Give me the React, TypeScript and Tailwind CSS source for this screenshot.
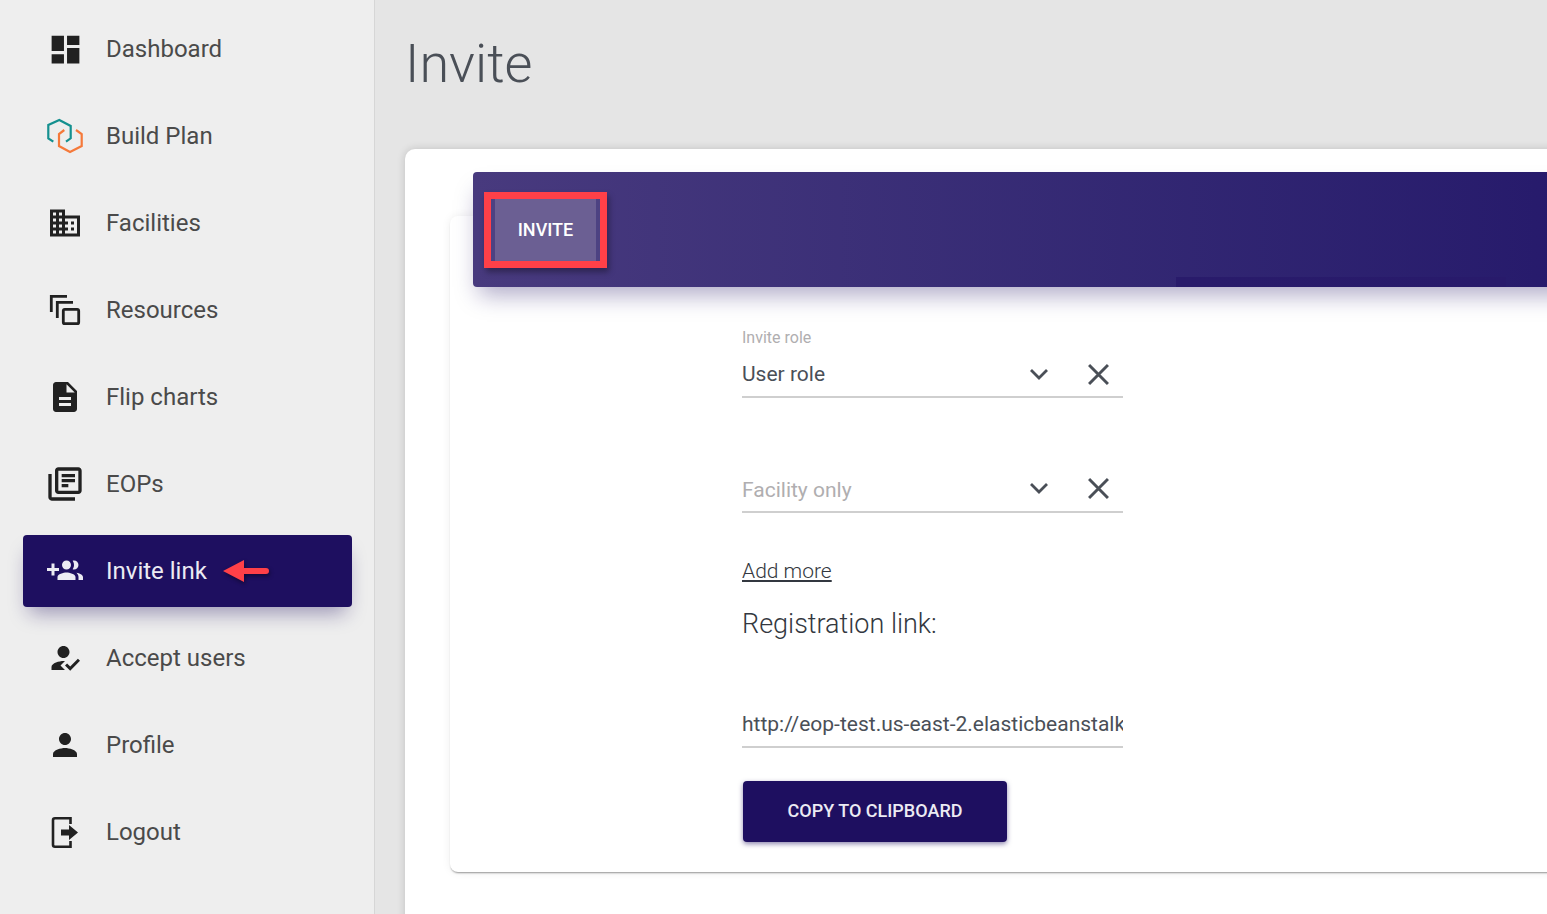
import React from 'react';

function DashboardIcon() {
  return (
    <svg viewBox="0 0 24 24" className="size-[37px] shrink-0 -mx-[0.5px] fill-[#212121]">
      <path d="M3 13h8V3H3v10zm0 8h8v-6H3v6zm10 0h8V11h-8v10zm0-18v6h8V3h-8z" />
    </svg>
  );
}

function BuildPlanIcon() {
  return (
    <svg viewBox="0 0 36 36" className="size-9 shrink-0 fill-none" strokeWidth="2.2">
      <path d="M6.3 23.7 1.3 20.3V7L12.3 2l11.4 6v12.3L19 23.7" stroke="#14908f" />
      <path d="M17.3 12 12 16v12l11 6 11.7-6V16L29 12" stroke="#f5793a" />
    </svg>
  );
}

function FacilitiesIcon() {
  return (
    <svg viewBox="0 0 24 24" className="size-9 shrink-0 fill-[#212121]">
      <path d="M12 7V3H2v18h20V7H12zM6 19H4v-2h2v2zm0-4H4v-2h2v2zm0-4H4V9h2v2zm0-4H4V5h2v2zm4 12H8v-2h2v2zm0-4H8v-2h2v2zm0-4H8V9h2v2zm0-4H8V5h2v2zm10 12h-8v-2h2v-2h-2v-2h2v-2h-2V9h8v10zm-2-8h-2v2h2v-2zm0 4h-2v2h2v-2z" />
    </svg>
  );
}

function ResourcesIcon() {
  return (
    <svg viewBox="0 0 36 36" className="size-9 shrink-0 fill-none stroke-[#212121]" strokeWidth="2.8">
      <path d="M4.3 20V4.3H20" />
      <path d="M10.3 26V10.3H26" />
      <rect x="16.3" y="17.3" width="15.4" height="14.4" rx="1.5" />
    </svg>
  );
}

function FlipChartsIcon() {
  return (
    <svg viewBox="0 0 24 24" className="size-9 shrink-0 fill-[#212121]">
      <path d="M14 2H6c-1.1 0-1.99.9-1.99 2L4 20c0 1.1.89 2 1.99 2H18c1.1 0 2-.9 2-2V8l-6-6zm2 16H8v-2h8v2zm0-4H8v-2h8v2zm-3-5V3.5L18.5 9H13z" />
    </svg>
  );
}

function EopsIcon() {
  return (
    <svg viewBox="1.2 1.2 21.6 21.6" className="size-9 shrink-0 fill-[#212121]">
      <path d="M4 6H2v14c0 1.1.9 2 2 2h14v-2H4V6zm16-4H8c-1.1 0-2 .9-2 2v12c0 1.1.9 2 2 2h12c1.1 0 2-.9 2-2V4c0-1.1-.9-2-2-2zm0 14H8V4h12v12zM10 9h8v2h-8zm0 3h4v2h-4zm0-6h8v2h-8z" />
    </svg>
  );
}

function InviteIcon() {
  return (
    <svg viewBox="0 0 24 24" className="size-9 shrink-0 fill-[#ecebf3]">
      <path d="M8 10H5V7H3v3H0v2h3v3h2v-3h3v-2zm10 1c1.66 0 2.99-1.34 2.99-3S19.66 5 18 5c-.32 0-.63.05-.91.14.57.81.9 1.79.9 2.86s-.34 2.04-.9 2.86c.28.09.59.14.91.14zm-5 0c1.66 0 2.99-1.34 2.99-3S14.66 5 13 5c-1.66 0-3 1.34-3 3s1.34 3 3 3zm6.62 2.16c.83.73 1.38 1.66 1.38 2.84v2h3v-2c0-1.54-2.37-2.49-4.38-2.84zM13 13c-2 0-6 1-6 3v2h12v-2c0-2-4-3-6-3z" />
    </svg>
  );
}

function AcceptIcon() {
  return (
    <svg viewBox="0 0 24 24" className="size-9 shrink-0 fill-[#212121]">
      <path d="M9 17l3-2.94c-.39-.04-.68-.06-1-.06-2.67 0-8 1.34-8 4v2h9l-3-3zm2-5c2.21 0 4-1.79 4-4s-1.79-4-4-4-4 1.79-4 4 1.79 4 4 4" />
      <path d="M15.47 20.5L12 17l1.4-1.41 2.07 2.08 5.13-5.17 1.4 1.41z" />
    </svg>
  );
}

function ProfileIcon() {
  return (
    <svg viewBox="0 0 24 24" className="size-9 shrink-0 fill-[#212121]">
      <path d="M12 12c2.21 0 4-1.79 4-4s-1.79-4-4-4-4 1.79-4 4 1.79 4 4 4zm0 2c-2.67 0-8 1.34-8 4v2h16v-2c0-2.66-5.33-4-8-4z" />
    </svg>
  );
}

function LogoutIcon() {
  return (
    <svg viewBox="0 0 36 36" className="size-9 shrink-0">
      <path d="M23.5 10V4.3H8a2 2 0 0 0-2 2v24.4a2 2 0 0 0 2 2h15.5V27" fill="none" stroke="#212121" strokeWidth="2.6" />
      <path d="M14 15.5h8V11l9 7.5-9 7.5v-4.5h-8z" fill="#212121" />
    </svg>
  );
}

function RedArrow() {
  return (
    <svg viewBox="0 0 46 22" className="w-[46px] h-[22px] ml-[16px] shrink-0 drop-shadow-[1px_2px_2px_rgba(0,0,0,0.45)]">
      <path d="M0 11 21 0v8h22a3 3 0 0 1 0 6H21v8z" fill="#ff4048" />
    </svg>
  );
}

function Chevron() {
  return (
    <svg viewBox="0 0 18 11" className="w-[18px] h-[11px] shrink-0 fill-none stroke-[#4a4f57]" strokeWidth="2.8">
      <path d="M1 1l8 8 8-8" />
    </svg>
  );
}

function Cross() {
  return (
    <svg viewBox="0 0 20 20" className="size-[21px] shrink-0 ml-[40px] mr-[14px] stroke-[#4a4f57]" strokeWidth="2.8">
      <path d="M1 1l18 18M19 1 1 19" />
    </svg>
  );
}

const navItems = [
  { label: 'Dashboard', icon: <DashboardIcon /> },
  { label: 'Build Plan', icon: <BuildPlanIcon /> },
  { label: 'Facilities', icon: <FacilitiesIcon /> },
  { label: 'Resources', icon: <ResourcesIcon /> },
  { label: 'Flip charts', icon: <FlipChartsIcon /> },
  { label: 'EOPs', icon: <EopsIcon /> },
  { label: 'Invite link', icon: <InviteIcon />, active: true },
  { label: 'Accept users', icon: <AcceptIcon /> },
  { label: 'Profile', icon: <ProfileIcon /> },
  { label: 'Logout', icon: <LogoutIcon /> },
];

function Sidebar() {
  return (
    <aside className="w-[375px] shrink-0 bg-[#eeeeee] border-r border-[#d6d6d6] pl-[23px] pr-[22px] pt-[13px] flex flex-col gap-[15px]">
      {navItems.map((item) => (
        <div
          key={item.label}
          className={`h-[72px] pl-6 flex items-center gap-[23px] rounded text-[24px] leading-none ${
            item.active
              ? 'bg-[#1e0f60] text-[#ecebf3] shadow-[0_12px_20px_-6px_rgba(30,15,96,0.4)]'
              : 'text-[#4a4a4a]'
          }`}
        >
          {item.icon}
          <span className="flex items-center whitespace-nowrap">
            {item.label}
            {item.active && <RedArrow />}
          </span>
        </div>
      ))}
    </aside>
  );
}

function SelectRow({ text, placeholder }: { text: string; placeholder?: boolean }) {
  return (
    <div className="h-[46px] flex items-center border-b-2 border-[#cfcfcf]">
      <span className={`flex-1 text-[21px] leading-none ${placeholder ? 'pt-[3px] text-[#b0aeb0]' : 'pt-px text-[#4a4f57]'}`}>{text}</span>
      <div className={`flex items-center ${placeholder ? 'mb-[2px]' : ''}`}>
        <Chevron />
        <Cross />
      </div>
    </div>
  );
}

export default function App() {
  return (
    <div className="h-screen w-full flex overflow-hidden bg-[#e5e5e5] font-[Roboto,sans-serif]">
      <Sidebar />
      <main className="flex-1 min-w-0 pl-[30px] overflow-hidden">
        <h1 className="h-[149px] pt-[31px] text-[54px] leading-[66px] font-light text-[#4a4f57]">Invite</h1>
        <div className="w-[1300px] h-[800px] bg-white rounded-[10px] shadow-[0_0_8px_rgba(0,0,0,0.16)] pl-[45px] pt-[67px]">
          <section className="w-[1200px] h-[656px] bg-white rounded-lg shadow-[0_2px_2px_-1px_rgba(0,0,0,0.4),0_0_10px_rgba(0,0,0,0.07)]">
            <header className="relative -top-[44px] ml-[23px] h-[115px] pl-[11px] pt-5 rounded bg-gradient-to-r from-[#483a7e] to-[#24176a] shadow-[0_14px_22px_-6px_rgba(30,15,96,0.35)]">
              <div className="w-[123px] h-[76px] border-[7px] border-[#ff4048] bg-[#4d4282] px-1 shadow-[2px_4px_6px_rgba(0,0,0,0.35)]">
                <div className="h-full pb-[2px] bg-[#6b5f93] flex items-center justify-center text-[18px] font-medium text-white">INVITE</div>
              </div>
              <div className="absolute left-[703px] bottom-0 w-[330px] h-[10px] bg-gradient-to-r from-[#291b6b] to-[#281a6b]" />
            </header>
            <div className="-mt-[3px] ml-[292px] w-[381px] flex flex-col">
              <label className="h-[20px] text-[16px] leading-5 text-[#b0aeb0]">Invite role</label>
              <div className="mt-[4px]">
                <SelectRow text="User role" />
              </div>
              <div className="mt-[69px]">
                <SelectRow text="Facility only" placeholder />
              </div>
              <a className="mt-[44px] self-start h-[28px] text-[21px] leading-[28px] font-light text-[#333840] underline">Add more</a>
              <h2 className="mt-[21px] h-9 text-[27px] leading-9 font-light text-[#333840]">Registration link:</h2>
              <div className="mt-[60px] h-[46px] flex items-center border-b-2 border-[#cfcfcf] overflow-hidden whitespace-nowrap text-[21px] leading-none text-[#4a4f57]">
                http://eop-test.us-east-2.elasticbeanstalk
              </div>
              <button className="mt-[33px] ml-px w-[264px] h-[61px] pb-[2px] rounded bg-[#1e0f60] text-[18px] font-medium text-[#ecebf3] shadow-[0_2px_5px_rgba(30,15,96,0.5)]">
                COPY TO CLIPBOARD
              </button>
            </div>
          </section>
        </div>
      </main>
    </div>
  );
}
